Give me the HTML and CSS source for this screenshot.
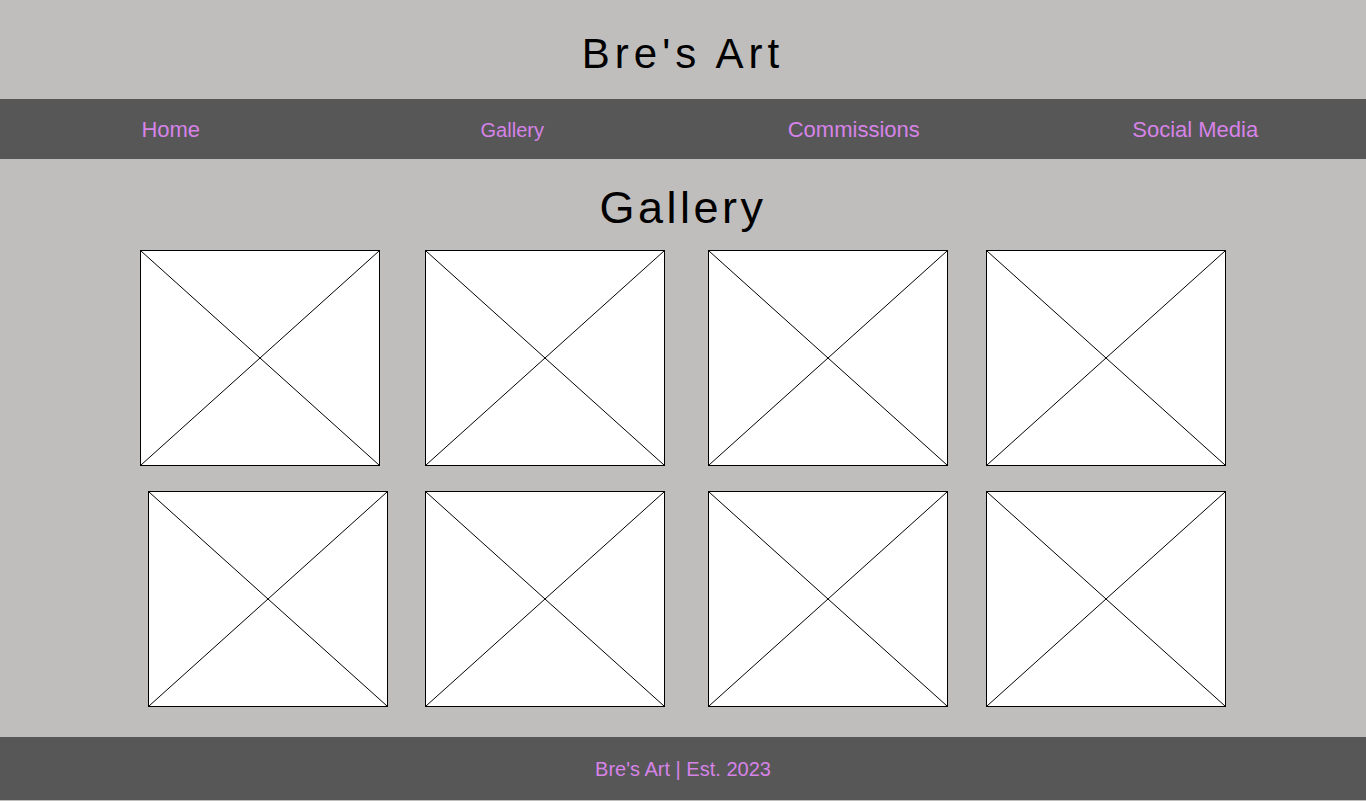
FILE: index.html
```html
<!DOCTYPE html>
<html lang="en">
<head>
  <meta charset="UTF-8">
  <title>Bre's Art - Gallery</title>
  <link rel="stylesheet" href="styles.css">
</head>
<body>
  <!-- Header -->
  <header class="site-header">
    <h1>Bre's Art</h1>
  </header>

  <!-- Navigation -->
  <nav class="main-nav">
    <a href="#" class="nav-link">Home</a>
    <a href="#" class="nav-link small">Gallery</a>
    <a href="#" class="nav-link">Commissions</a>
    <a href="#" class="nav-link">Social Media</a>
  </nav>

  <main class="gallery">
    <h2>Gallery</h2>

    <div class="row row-one">
      <div class="pic"><svg viewBox="0 0 238 214" preserveAspectRatio="none"><line x1="0" y1="0" x2="238" y2="214"/><line x1="238" y1="0" x2="0" y2="214"/></svg></div>
      <div class="pic"><svg viewBox="0 0 238 214" preserveAspectRatio="none"><line x1="0" y1="0" x2="238" y2="214"/><line x1="238" y1="0" x2="0" y2="214"/></svg></div>
      <div class="pic"><svg viewBox="0 0 238 214" preserveAspectRatio="none"><line x1="0" y1="0" x2="238" y2="214"/><line x1="238" y1="0" x2="0" y2="214"/></svg></div>
      <div class="pic"><svg viewBox="0 0 238 214" preserveAspectRatio="none"><line x1="0" y1="0" x2="238" y2="214"/><line x1="238" y1="0" x2="0" y2="214"/></svg></div>
    </div>

    <div class="row row-two">
      <div class="pic"><svg viewBox="0 0 238 214" preserveAspectRatio="none"><line x1="0" y1="0" x2="238" y2="214"/><line x1="238" y1="0" x2="0" y2="214"/></svg></div>
      <div class="pic"><svg viewBox="0 0 238 214" preserveAspectRatio="none"><line x1="0" y1="0" x2="238" y2="214"/><line x1="238" y1="0" x2="0" y2="214"/></svg></div>
      <div class="pic"><svg viewBox="0 0 238 214" preserveAspectRatio="none"><line x1="0" y1="0" x2="238" y2="214"/><line x1="238" y1="0" x2="0" y2="214"/></svg></div>
      <div class="pic"><svg viewBox="0 0 238 214" preserveAspectRatio="none"><line x1="0" y1="0" x2="238" y2="214"/><line x1="238" y1="0" x2="0" y2="214"/></svg></div>
    </div>
  </main>

  <footer class="site-footer">
    <p>Bre's Art | Est. 2023</p>
  </footer>
</body>
</html>
```
FILE: styles.css
```css
body {
  background-color: #bfbebc;
  margin: 0;
  font-family: "Liberation Sans", Arial, sans-serif;
}
.site-header {
  height: 99px;
  display: flex;
  justify-content: center;
  align-items: center;
}
.site-header h1 {
  margin: 0;
  font-size: 42px;
  font-weight: normal;
  letter-spacing: 5px;
  color: black;
  padding-top: 8px;
}
.main-nav {
  background-color: #575757;
  height: 60px;
  display: grid;
  grid-template-columns: repeat(4, 1fr);
  align-items: center;
}
.nav-link {
  text-align: center;
  color: #d683e8;
  text-decoration: none;
  font-size: 22px;
  padding-top: 1px;
}
.nav-link.small {
  font-size: 20px;
  padding-top: 3px;
}
.gallery {
  padding-bottom: 30px;
}
.gallery h2 {
  margin: 0;
  height: 91px;
  line-height: 98px;
  text-align: center;
  font-size: 45px;
  font-weight: normal;
  letter-spacing: 3.5px;
  color: black;
}
.row {
  display: flex;
}
.row-two {
  margin-top: 25px;
}
.pic {
  width: 238px;
  height: 214px;
  border: 1px solid black;
  background: white;
}
.pic svg {
  display: block;
  width: 100%;
  height: 100%;
}
.pic line {
  stroke: black;
  stroke-width: 1;
}
/* uneven spacing, like the original */
.row-one .pic:nth-child(1) { margin-left: 140px; }
.row-one .pic:nth-child(2) { margin-left: 45px; }
.row-one .pic:nth-child(3) { margin-left: 43px; }
.row-one .pic:nth-child(4) { margin-left: 38px; }
.row-two .pic:nth-child(1) { margin-left: 148px; }
.row-two .pic:nth-child(2) { margin-left: 37px; }
.row-two .pic:nth-child(3) { margin-left: 43px; }
.row-two .pic:nth-child(4) { margin-left: 38px; }
.site-footer {
  background-color: #575757;
  height: 63px;
  display: flex;
  justify-content: center;
  align-items: center;
}
.site-footer p {
  margin: 0;
  padding-top: 2px;
  color: #d683e8;
  font-size: 20px;
}
```
